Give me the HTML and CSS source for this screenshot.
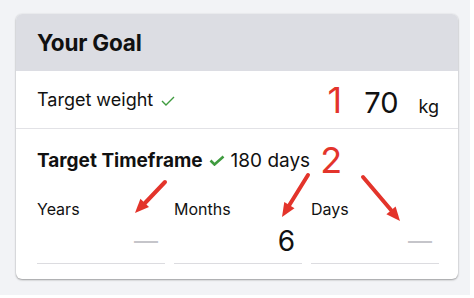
FILE: index.html
```html
<!DOCTYPE html>
<html lang="en">
<head>
    <meta charset="UTF-8">
    <meta name="viewport" content="width=device-width, initial-scale=1.0">
    <title>Your Goal</title>
    <link rel="stylesheet" href="styles.css">
</head>
<body>
    <div class="page">
        <!-- Goal card -->
        <section class="card">
            <header class="card-header">
                <h1>Your Goal</h1>
            </header>

            <!-- Target weight -->
            <div class="row weight-row">
                <div class="row-label">
                    Target weight
                    <svg class="check" width="14" height="10" viewBox="0 0 14 10">
                        <polyline points="1,5 5,9 13,1" fill="none" stroke="#3f9b3f" stroke-width="1.4"/>
                    </svg>
                </div>
                <div class="weight-value">
                    <span class="note">1</span>
                    <span class="big-number">70</span>
                    <span class="unit">kg</span>
                </div>
            </div>

            <!-- Target timeframe -->
            <div class="row timeframe-row">
                <div class="timeframe-head">
                    <strong>Target Timeframe</strong>
                    <svg class="check bold" width="16" height="11" viewBox="0 0 16 11">
                        <polyline points="1.5,5.5 5.5,9.5 14.5,1.5" fill="none" stroke="#3f9b3f" stroke-width="2.6"/>
                    </svg>
                    <span class="total">180 days</span>
                    <span class="note note-two">2</span>
                </div>
                <div class="fields">
                    <div class="field">
                        <label>Years</label>
                        <div class="field-value empty">—</div>
                    </div>
                    <div class="field">
                        <label>Months</label>
                        <div class="field-value">6</div>
                    </div>
                    <div class="field">
                        <label>Days</label>
                        <div class="field-value empty">—</div>
                    </div>
                </div>
            </div>

            <!-- Annotation arrows -->
            <svg class="arrows" width="442" height="265" viewBox="0 0 442 265">
                <g stroke="#e3342b" stroke-width="4" stroke-linecap="round" fill="#e3342b">
                    <line x1="149" y1="168" x2="129" y2="189"/>
                    <line x1="292" y1="161" x2="273.4" y2="191"/>
                    <line x1="347" y1="163" x2="375" y2="196"/>
                </g>
                <g fill="#e3342b">
                    <polygon points="119,199 133,193.1 124.4,184.7"/>
                    <polygon points="266,203 278.5,194.3 268.3,187.9"/>
                    <polygon points="384,207 379.6,192.4 370.4,200.2"/>
                </g>
            </svg>
        </section>
    </div>
</body>
</html>
```

FILE: styles.css
```css
/* General */
body {
    margin: 0;
    background-color: #fff;
    font-family: Inter, "Liberation Sans", Arial, sans-serif;
    color: #111;
}

.page {
    width: 438px;
    height: 267px;
    padding: 14px 16px;
    background-color: #f2f3f6;
}

/* Card */
.card {
    position: relative;
    width: 442px;
    background-color: #fff;
    border-radius: 6px;
    overflow: hidden;
    box-shadow: 0 1px 2px rgba(0, 0, 0, 0.35), 0 0 2px rgba(0, 0, 0, 0.08);
}

.card-header {
    height: 57px;
    display: flex;
    align-items: center;
    padding: 0 21px;
    background-color: #dcdde3;
}

.card-header h1 {
    margin: 0;
    font-size: 22.5px;
    font-weight: 700;
    letter-spacing: -0.2px;
}

/* Rows */
.row {
    padding: 0 19px 0 21px;
}

.weight-row {
    height: 57px;
    display: flex;
    align-items: center;
    justify-content: space-between;
    border-bottom: 1px solid #e2e2e6;
}

.row-label {
    font-size: 18px;
    display: flex;
    align-items: center;
    gap: 8px;
}

.check {
    margin-top: 2px;
}

.weight-value {
    display: flex;
    align-items: baseline;
}

.note {
    color: #e3342b;
    font-size: 36px;
    font-weight: 400;
}

.big-number {
    font-size: 29px;
    margin-left: 22px;
}

.unit {
    font-size: 18px;
    margin-left: 20px;
}

/* Timeframe */
.timeframe-row {
    padding-top: 19px;
    padding-bottom: 15px;
}

.timeframe-head {
    height: 24px;
    display: flex;
    align-items: center;
    font-size: 18px;
}

.timeframe-head strong {
    font-size: 19px;
    font-weight: 700;
}

.timeframe-head .check {
    margin: 0 6px 0 6px;
}

.total {
    font-size: 19px;
}

.note-two {
    font-size: 36px;
    line-height: 24px;
    margin-left: 10px;
    margin-top: 0;
}

.fields {
    display: grid;
    grid-template-columns: repeat(3, 1fr);
    gap: 9px;
    margin-top: 27px;
}

.field label {
    display: block;
    font-size: 16px;
    line-height: 20px;
}

.field-value {
    height: 34px;
    margin-top: 5px;
    padding-right: 7px;
    text-align: right;
    font-size: 28px;
    line-height: 34px;
    border-bottom: 1px solid #dcdce0;
    padding-bottom: 5px;
}

.field-value.empty {
    color: #c5c5ca;
    font-size: 24px;
}

/* Arrows overlay */
.arrows {
    position: absolute;
    left: 0;
    top: 0;
    pointer-events: none;
}
```
